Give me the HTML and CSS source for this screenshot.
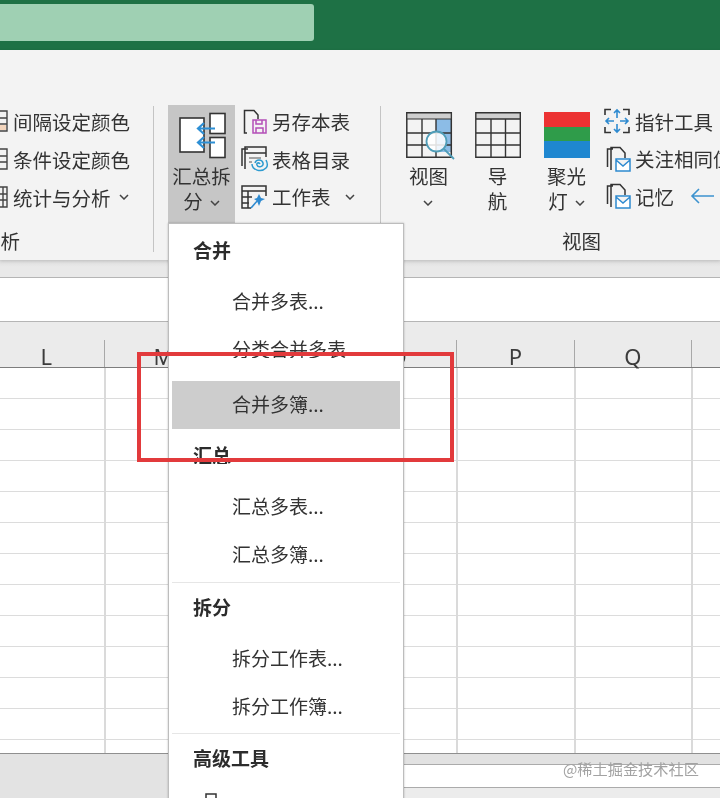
FILE: index.html
```html
<!DOCTYPE html>
<html lang="zh">
<head>
<meta charset="utf-8">
<title>汇总拆分</title>
<link rel="stylesheet" href="styles.css">
</head>
<body>
<div class="page">
  <header class="titlebar"><div class="search"></div></header>

  <section class="ribbon">
    <div class="group group-a">
      <div class="group-row">
        <div class="small-col col-a">
          <div class="small-row"><svg class="clip-icon" viewBox="0 0 8 24"><path d="M0 2H7V22H0M0 9H7M0 15H7" fill="none" stroke="#444" stroke-width="1.4"/><path d="M0 16H6V21H0Z" fill="#f3d5bd"/></svg><span>间隔设定颜色</span></div>
          <div class="small-row"><svg class="clip-icon" viewBox="0 0 8 24"><path d="M0 2H7V22H0M0 9H7M0 15H7" fill="none" stroke="#444" stroke-width="1.4"/></svg><span>条件设定颜色</span></div>
          <div class="small-row"><svg class="clip-icon" viewBox="0 0 8 24"><path d="M0 2H7V22H0M0 9H7M0 15H7M3 2V22" fill="none" stroke="#444" stroke-width="1.4"/></svg><span>统计与分析</span><svg class="chev chev-a" viewBox="0 0 10 6"><path d="M1 1L5 5L9 1" fill="none" stroke="#444" stroke-width="1.5"/></svg></div>
        </div>
      </div>
      <div class="group-label label-a">分析</div>
    </div>
    <div class="sep"></div>

    <div class="group group-b">
      <div class="group-row">
        <button class="big big-active">
          <svg class="big-icon" viewBox="0 0 46 46">
            <rect x="1" y="6" width="24" height="34" fill="#fff" stroke="#333" stroke-width="1.6"/>
            <rect x="31" y="1.500" width="15" height="20" fill="#fff" stroke="#333" stroke-width="1.6"/>
            <rect x="31" y="25.500" width="15" height="20" fill="#fff" stroke="#333" stroke-width="1.6"/>
            <path d="M36 16.500H19M25 11L19 16.500L25 22M36 30.500H19M25 25L19 30.500L25 36" fill="none" stroke="#2d8fd5" stroke-width="2.200"/>
          </svg>
          <span class="big-text">汇总拆<br>分<svg class="chev chev-big" viewBox="0 0 10 6"><path d="M1 1L5 5L9 1" fill="none" stroke="#444" stroke-width="1.5"/></svg></span>
        </button>
        <div class="small-col col-b">
          <div class="small-row"><svg class="icon" viewBox="0 0 26 26"><path d="M6 24H3.500V1.500H13L17 6V10" fill="none" stroke="#333" stroke-width="1.5"/><path d="M12 11H25V24H12ZM15 11V15H21V11M15 24V19H22V24" fill="none" stroke="#b44fb8" stroke-width="1.500"/></svg><span>另存本表</span></div>
          <div class="small-row"><svg class="icon" viewBox="0 0 26 26"><path d="M1 20V3H7M4 23V1H25V11M4 7H25" fill="none" stroke="#333" stroke-width="1.5"/><path d="M8 12H20M8 16H11" stroke="#555" stroke-width="1.2"/><path d="M14 17C15 13 21 13 22 17C23 21 17 22 16 19C15 17 18 16 19 18M11 18C11 24 20 27 25 22C27 20 26 16 25 14" fill="none" stroke="#2e9bd0" stroke-width="1.500"/></svg><span>表格目录</span></div>
          <div class="small-row"><svg class="icon" viewBox="0 0 26 26"><path d="M10 24H1V2H25V12M1 7H25M1 13H11M1 19H8M7 7V24" fill="none" stroke="#333" stroke-width="1.5"/><path d="M10 24L17 16" stroke="#2e8ad0" stroke-width="1.600"/><path d="M18 10L20 14L24 15L20 17L18 22L16 17L13 15L16 14Z" fill="#2e8ad0"/></svg><span>工作表</span><svg class="chev chev-b" viewBox="0 0 10 6"><path d="M1 1L5 5L9 1" fill="none" stroke="#444" stroke-width="1.5"/></svg></div>
        </div>
      </div>
    </div>
    <div class="sep"></div>

    <div class="group group-c">
      <div class="group-row">
        <button class="big">
          <svg class="big-icon" viewBox="0 0 46 46">
            <path d="M30 7H45.300V40H30Z" fill="#8cbce6"/>
            <path d="M.800.800H45.300V45.300H.800Z" fill="none" stroke="#333" stroke-width="1.500"/>
            <path d="M.800 1H45.300V7H.800Z" fill="#cfcfcf" stroke="#333" stroke-width="1.200"/>
            <path d="M16 7V45M30 7V45M1 21H45M1 33H45" fill="none" stroke="#333" stroke-width="1.400"/>
            <circle cx="30.500" cy="29.500" r="10" fill="#fff" fill-opacity=".85" stroke="#4f9db8" stroke-width="1.800"/>
            <path d="M38 37L48 47" stroke="#4f9db8" stroke-width="1.800"/>
          </svg>
          <span class="big-text">视图<br><svg class="chev chev-solo" viewBox="0 0 10 6"><path d="M1 1L5 5L9 1" fill="none" stroke="#444" stroke-width="1.5"/></svg></span>
        </button>
        <button class="big">
          <svg class="big-icon" viewBox="0 0 46 46">
            <path d="M.800 1H45.300V7H.800Z" fill="#cfcfcf"/>
            <path d="M.800.800H45.300V45.300H.800ZM.800 7H45.300M16 7V45M30.500 7V45M1 21H45M1 33H45" fill="none" stroke="#333" stroke-width="1.400"/>
          </svg>
          <span class="big-text">导<br>航</span>
        </button>
        <button class="big">
          <svg class="big-icon" viewBox="0 0 46 46">
            <rect width="46" height="15" fill="#ec3232"/>
            <rect y="15" width="46" height="14" fill="#2f9c4a"/>
            <rect y="29" width="46" height="17" fill="#1f87d0"/>
          </svg>
          <span class="big-text">聚光<br>灯<svg class="chev chev-big" viewBox="0 0 10 6"><path d="M1 1L5 5L9 1" fill="none" stroke="#444" stroke-width="1.5"/></svg></span>
        </button>
        <div class="small-col col-c">
          <div class="small-row"><svg class="icon" viewBox="0 0 26 26"><path d="M1 7V1.500H7M19 1.500H25V7M1 19V24.500H7M19 24.500H25V19" fill="none" stroke="#333" stroke-width="1.600"/><path d="M13 2V10M10 5L13 2L16 5M13 24V16M10 21L13 24L16 21M2 13H10M5 10L2 13L5 16M24 13H16M21 10L24 13L21 16" fill="none" stroke="#2e8ad0" stroke-width="1.600"/></svg><span>指针工具</span></div>
          <div class="small-row"><svg class="icon" viewBox="-2 0 26 26"><path d="M1.500 21V3H7M5 24V1.500H14L19 7V12" fill="none" stroke="#333" stroke-width="1.500"/><path d="M10 13H24V25H10ZM10 14L17 20L24 14" fill="#fff" stroke="#2e8ad0" stroke-width="1.500"/></svg><span>关注相同值</span></div>
          <div class="small-row"><svg class="icon" viewBox="-2 0 26 26"><path d="M1.500 21V3H7M5 24V1.500H14L19 7V12" fill="none" stroke="#333" stroke-width="1.500"/><path d="M10 13H24V25H10ZM10 14L17 20L24 14" fill="#fff" stroke="#2e8ad0" stroke-width="1.500"/></svg><span>记忆</span><svg class="back" viewBox="0 0 24 16"><path d="M24 8H2M9 1L2 8L9 15" fill="none" stroke="#3d93cf" stroke-width="1.600"/></svg></div>
        </div>
      </div>
      <div class="group-label label-c">视图</div>
    </div>
  </section>

  <div class="band"></div>
  <div class="formula"></div>

  <div class="col-head">
    <div class="col"><span>L</span></div>
    <div class="col"><span>M</span></div>
    <div class="col"><span>N</span></div>
    <div class="col"><span>O</span></div>
    <div class="col"><span>P</span></div>
    <div class="col"><span>Q</span></div>
    <div class="col"><span>R</span></div>
  </div>
  <div class="sheet"></div>

  <footer class="footer">
    <div class="foot-left"></div>
    <div class="foot-right">
      <div class="scroll"></div>
      <div class="status"></div>
      <div class="tail"></div>
    </div>
  </footer>

  <nav class="menu">
    <div class="sec">合并</div>
    <div class="item">合并多表...</div>
    <div class="item item-cut"><span>分类合并多表</span></div>
    <div class="item item-on">合并多簿...</div>
    <div class="sec sec-cut"><span>汇总</span></div>
    <div class="item">汇总多表...</div>
    <div class="item">汇总多簿...</div>
    <div class="rule"></div>
    <div class="sec">拆分</div>
    <div class="item">拆分工作表...</div>
    <div class="item">拆分工作簿...</div>
    <div class="rule rule-last"></div>
    <div class="sec">高级工具</div>
    <svg class="menu-icon" viewBox="0 0 12 6"><path d="M1 6V1H11V6" fill="none" stroke="#333" stroke-width="1.500"/></svg>
  </nav>

  <div class="redbox"></div>
  <div class="mark">@稀土掘金技术社区</div>
</div>
</body>
</html>
```
FILE: styles.css
```css
* { box-sizing: border-box; }
html, body { margin: 0; padding: 0; }
body { width: 720px; height: 798px; overflow: hidden; background: #fff; }

.page {
  position: relative;
  width: 720px;
  height: 798px;
  overflow: hidden;
  font-family: "Noto Sans CJK SC", "Noto Sans", sans-serif;
  color: #333;
  filter: blur(.45px);
}

.titlebar { height: 50px; padding-top: 4px; background: #1e7145; }
.search { width: 314px; height: 37px; background: #9fd0b3; border-radius: 0 3px 3px 0; }

.ribbon {
  display: flex;
  height: 210px;
  padding-top: 53px;
  background: #f3f3f3;
  font-size: 19.500px;
  box-shadow: 0 1px 3px rgba(0,0,0,.14);
  position: relative;
}
.group { display: flex; flex-direction: column; flex: none; overflow: hidden; }
.group-row { display: flex; height: 124px; }
.group-label { height: 28px; line-height: 28px; white-space: nowrap; }
.label-a { margin-left: -19px; }
.label-c { margin-left: 168px; }
.sep { flex: none; width: 1px; height: 146px; margin-top: 3px; background: #c4c4c4; }

.group-a { width: 153px; }
.group-b { width: 226px; padding-left: 14px; }
.group-c { width: 340px; padding-left: 13px; }

.small-col { display: flex; flex-direction: column; flex: none; }
.small-row { display: flex; align-items: center; height: 38px; white-space: nowrap; }
.col-a { margin-top: -1px; }
.col-b { margin-left: 6px; }
.col-b .small-row { height: 37.500px; }
.col-c { margin-left: 3px; width: 140px; margin-top: -.500px; }
.col-c .small-row { height: 37.500px; }
.icon { width: 26px; height: 26px; margin-right: 5px; flex: none; overflow: visible; }
.clip-icon { width: 8px; height: 24px; margin-right: 5px; flex: none; }
.chev { width: 10px; height: 6px; flex: none; }
.chev-a { margin-left: 8px; }
.chev-b { margin-left: 14px; }
.chev-big { margin-left: 7px; vertical-align: 3px; }
.chev-solo { vertical-align: 3px; }
.back { width: 24px; height: 16px; margin-left: 16px; flex: none; }

.big {
  flex: none;
  width: 69px;
  height: 118px;
  margin: 2px 0 0;
  padding: 7px 0 0;
  border: 0;
  background: transparent;
  font: inherit;
  color: inherit;
  display: flex;
  flex-direction: column;
  align-items: center;
}
.big-active { width: 67px; background: #c6c6c6; }
.big-icon { width: 46px; height: 46px; flex: none; overflow: visible; }
.big-text { display: block; margin-top: 5px; line-height: 25px; text-align: center; white-space: nowrap; }

.band { height: 17px; background: linear-gradient(#dcdcdc, #e9e9e9 40%); }
.formula { height: 45px; background: #fff; border-top: 1px solid #b5b5b5; border-bottom: 1px solid #b5b5b5; }

.col-head {
  display: grid;
  grid-template-columns: repeat(7, 117.333px);
  height: 46px;
  margin-left: -12px;
  background: #ebebeb;
  border-bottom: 1px solid #7d7d7d;
  align-items: end;
}
.col {
  height: 27px;
  border-right: 1px solid #a8a8a8;
  text-align: center;
  font-family: "Noto Sans", sans-serif;
  font-size: 22px;
  line-height: 32px;
  color: #3c3c3c;
}
.col span { display: block; height: 27px; overflow: visible; }

.sheet {
  height: 385px;
  background-color: #fff;
  background-image:
    repeating-linear-gradient(90deg, transparent 0 104.500px, #dadada 104.500px 106.500px, transparent 106.500px 117.333px),
    repeating-linear-gradient(180deg, transparent 0 29.800px, #dcdcdc 29.800px 31px);
}

.footer { display: flex; height: 45px; border-top: 1px solid #8f8f8f; }
.foot-left { width: 168px; flex: none; background: #e3e3e3; }
.foot-right { flex: 1; display: flex; flex-direction: column; }
.scroll { height: 11px; background: #e2e2e2; border-bottom: 1px solid #ababab; }
.status { height: 23px; background: #fff; border-bottom: 1px solid #ababab; }
.tail { flex: 1; background: #ececec; }

.menu {
  position: absolute;
  left: 168px;
  top: 223px;
  width: 236px;
  height: 580px;
  padding: 2px 3px 0;
  background: #fff;
  border: 1px solid #bdbdbd;
  box-shadow: 0 0 2px rgba(0,0,0,.25);
  font-size: 19px;
  color: #333;
}
.sec { height: 50px; padding-left: 21px; line-height: 47px; font-weight: 700; margin-bottom: 2px; color: #2c2c2c; }
.item { height: 48px; padding-left: 60px; line-height: 45px; white-space: nowrap; }
.item-cut span { display: block; height: 32px; line-height: 46px; overflow: hidden; }
.item-on { margin-top: 7px; background: #cdcdcd; }
.sec-cut { margin-top: 2px; }
.sec-cut span { display: block; height: 33px; overflow: hidden; }
.rule { height: 1px; margin-top: 3px; background: #e6e6e6; }
.rule-last { margin-top: 2px; }
.menu-icon { display: block; width: 12px; height: 6px; margin: 9px 0 0 33px; }

.redbox {
  position: absolute;
  left: 137px;
  top: 352px;
  width: 317px;
  height: 110px;
  border: 4px solid #e23a3c;
}

.mark {
  position: absolute;
  left: 563px;
  top: 757px;
  font-size: 15.200px;
  line-height: 22px;
  color: #a2a2a2;
  white-space: nowrap;
}
```
